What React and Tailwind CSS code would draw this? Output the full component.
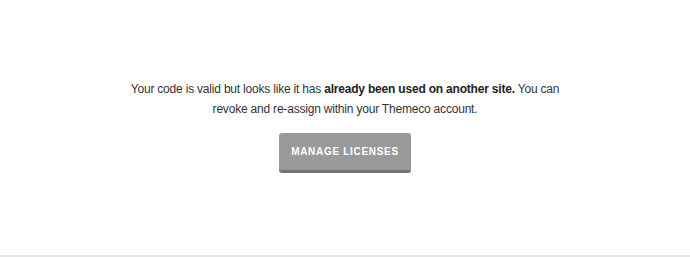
export default function App() {
  return (
    <div className="w-[690px] h-[257px] bg-white flex flex-col" style={{ fontFamily: '"Liberation Sans", Arial, sans-serif' }}>
      <main className="flex-1 flex flex-col items-center pt-[79px]">
        <p className="w-[440px] text-center text-[12px] tracking-[-0.2px] leading-[20px] text-[#333]">
          Your code is valid but looks like it has <strong className="font-bold text-[#222]">already been used on another site.</strong> You can revoke and re-assign within your Themeco account.
        </p>
        <button className="mt-[14px] w-[132px] h-[40px] rounded-[3px] bg-[#999] border-b-[3px] border-[#727272] text-white text-[10px] font-bold tracking-[0.07em] uppercase">
          Manage Licenses
        </button>
      </main>
      <div className="h-[2px] bg-[#e5e5e5]" />
    </div>
  )
}
